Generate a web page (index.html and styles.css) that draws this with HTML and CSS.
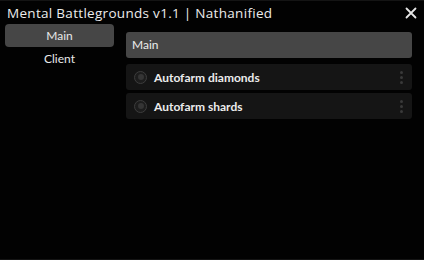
FILE: index.html
```html
<!DOCTYPE html>
<html>
<head>
<meta charset="utf-8">
<link rel="stylesheet" href="styles.css">
</head>
<body>
<div class="window">
  <div class="titlebar">
    <span class="title">Mental Battlegrounds v1.1 | Nathanified</span>
    <svg class="close" width="12" height="12" viewBox="0 0 12 12"><path d="M1.5 1.5 L10.5 10.5 M10.5 1.5 L1.5 10.5" stroke="#e6e6e6" stroke-width="1.8" stroke-linecap="round"/></svg>
  </div>
  <div class="body">
    <div class="sidebar">
      <div class="tab active">Main</div>
      <div class="tab">Client</div>
    </div>
    <div class="content">
      <div class="section">Main</div>
      <div class="row">
        <span class="radio"><span class="dot"></span></span>
        <span class="label">Autofarm diamonds</span>
        <span class="more"><i></i><i></i><i></i></span>
      </div>
      <div class="row">
        <span class="radio"><span class="dot"></span></span>
        <span class="label">Autofarm shards</span>
        <span class="more"><i></i><i></i><i></i></span>
      </div>
    </div>
  </div>
</div>
</body>
</html>
```
FILE: styles.css
```css
html, body {
  margin: 0;
  padding: 0;
  background: #000;
}
.window {
  width: 424px;
  height: 260px;
  background: #020202;
  font-family: "Lato", "Open Sans", sans-serif;
  color: #e8e8e8;
  box-sizing: border-box;
  border-top: 1px solid #141414;
  border-bottom: 1px solid #141414;
  display: flex;
  flex-direction: column;
}
.titlebar {
  height: 22px;
  display: flex;
  align-items: center;
  justify-content: space-between;
  padding: 0 7px 0 7px;
}
.title {
  font-family: "Open Sans", sans-serif;
  font-size: 13.5px;
  letter-spacing: 0.3px;
  color: #ececec;
  padding-top: 1px;
}
.close {
  margin-top: 2px;
}
.body {
  display: flex;
  padding: 1px 12px 0 5px;
  gap: 12px;
}
.sidebar {
  width: 109px;
  display: flex;
  flex-direction: column;
}
.tab {
  height: 23px;
  line-height: 23px;
  text-align: center;
  font-size: 12px;
  color: #e8e8e8;
  border-radius: 4px;
}
.tab.active {
  background: #464646;
}
.content {
  flex: 1;
  display: flex;
  flex-direction: column;
  gap: 3px;
  padding-top: 8px;
}
.section {
  height: 26px;
  line-height: 26px;
  background: #464646;
  border-radius: 3px;
  padding-left: 6px;
  font-size: 12px;
  color: #ececec;
  margin-bottom: 3px;
}
.row {
  height: 26px;
  background: #151515;
  border-radius: 3px;
  display: flex;
  align-items: center;
  padding-left: 8px;
}
.radio {
  width: 13px;
  height: 13px;
  border-radius: 50%;
  background: #1d1d1d;
  border: 1.5px solid #3d3d3d;
  display: flex;
  align-items: center;
  justify-content: center;
  box-sizing: border-box;
}
.dot {
  width: 6px;
  height: 6px;
  border-radius: 50%;
  background: #353535;
}
.label {
  margin-left: 7px;
  font-size: 12px;
  font-weight: bold;
  color: #ececec;
  flex: 1;
}
.more {
  display: flex;
  flex-direction: column;
  gap: 2px;
  margin-right: 9px;
}
.more i {
  width: 3px;
  height: 3px;
  border-radius: 50%;
  background: #3a3a3a;
}
```
